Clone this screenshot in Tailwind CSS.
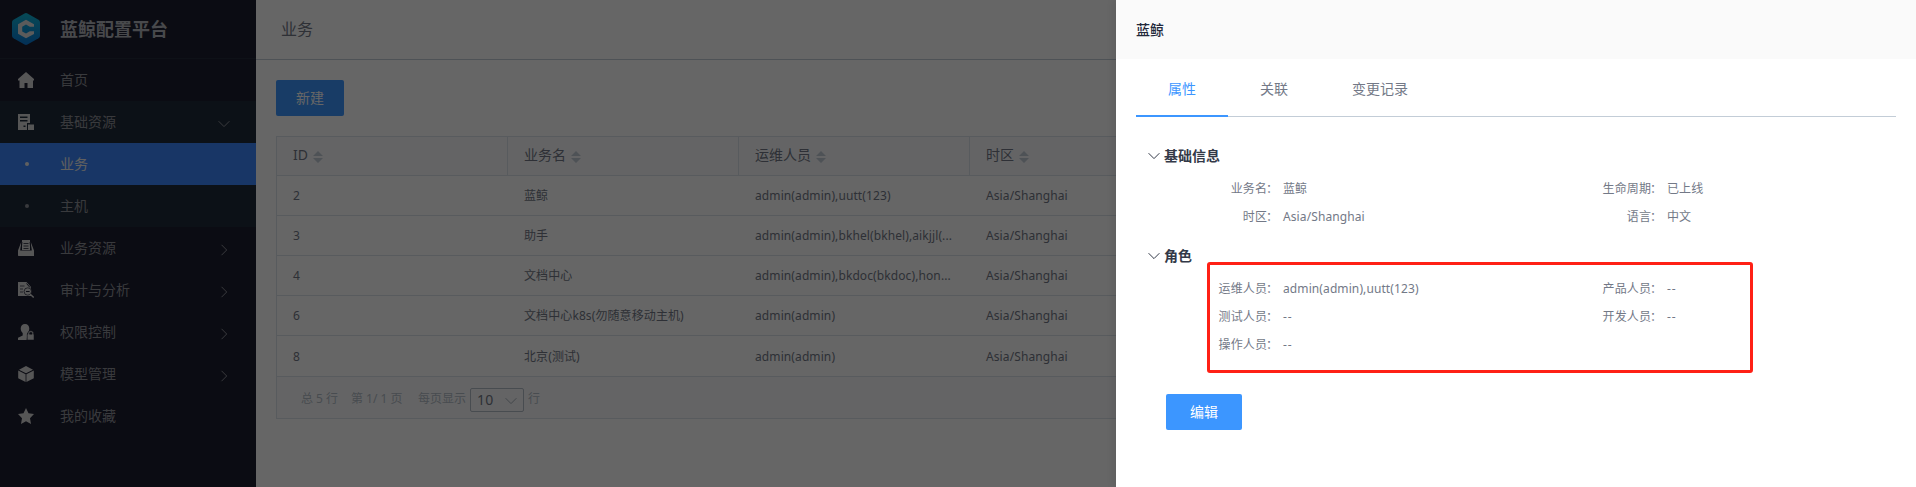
<!DOCTYPE html>
<html lang="zh-CN">
<head>
<meta charset="utf-8">
<title>蓝鲸配置平台</title>
<script src="https://cdn.jsdelivr.net/npm/@tailwindcss/browser@4"></script>
</head>
<body class="relative h-[487px] w-[1916px] overflow-hidden bg-white font-['Noto_Sans','Noto_Sans_CJK_SC',sans-serif] text-xs text-[#737987]">
<svg class="hidden">
  <symbol id="right" viewBox="0 0 12 12"><path d="M3.5 .8 8.7 6 3.5 11.2" fill="none" stroke="currentColor"/></symbol>
  <symbol id="down" viewBox="0 0 12 12"><path d="M.6 3.2 6 8.6 11.4 3.2" fill="none" stroke="currentColor"/></symbol>
  <symbol id="sort" viewBox="0 0 10 12"><path d="M5 0 10 5H0ZM0 7H10L5 12Z" fill="currentColor"/></symbol>
</svg>
<div class="flex h-full">
  <!-- Sidebar -->
  <aside class="flex w-64 shrink-0 flex-col bg-[#1c1e30] text-sm text-[#8f9198]">
    <div class="flex h-[59px] items-center border-b border-[#252b3a] pl-3 text-lg font-bold text-[#b4b6bd]">
      <svg class="mr-5 h-8 w-7" viewBox="0 0 28 32">
        <defs><linearGradient id="lg" x1="0" y1="0" x2="0" y2="1"><stop offset="0" stop-color="#10b8d8"/><stop offset="1" stop-color="#0a78d8"/></linearGradient></defs>
        <path d="M12.5.5q1.500-.8 3 0l11 6.200q1.500.9 1.500 2.600v13.400q0 1.700-1.500 2.600l-11 6.200q-1.500.8-3 0l-11-6.200Q0 24.400 0 22.700V9.300Q0 7.600 1.500 6.700Z" fill="url(#lg)"/>
        <path d="M14 6.800 22 11.300v2.400h-4.200L14 11.600 10.200 13.700v4.800L14 20.600l3.800-2.300H22v2.600L14 25.300 6 20.800v-9.500Z" fill="#e4e4e4"/>
      </svg>
      <span>蓝鲸配置平台</span>
    </div>
    <nav>
      <a class="flex h-[42px] items-center pl-[18px]"><svg class="mr-[26px] size-4 text-[#d8d8d8]" viewBox="0 0 16 16" fill="currentColor"><path d="M8 0 16 7v1.500h-1V16H9.500v-5h-3v5H1.500V8.500H0V7Z"/></svg>首页</a>
      <a class="flex h-[42px] items-center bg-[#202c3b] pr-[26px] pl-[18px]"><svg class="mr-[26px] size-4 text-[#d8d8d8]" viewBox="0 0 16 16" fill="currentColor" fill-rule="evenodd"><path d="M0 0H12V9H9V16H0ZM2 2.500V4H9.500V2.500ZM2 6V7.500H9.500V6ZM5.500 11.500V13H7.500V11.500ZM10 10.500H16V16H10Z"/></svg><span class="flex-1">基础资源</span><svg class="mt-1 size-3"><use href="#down"/></svg></a>
      <a class="flex h-[42px] items-center bg-[#3c88ff] pl-[25px] text-[#f0f0f0]"><i class="mr-[31px] size-1 rounded-full bg-current"></i>业务</a>
      <a class="flex h-[42px] items-center bg-[#202c3b] pl-[25px]"><i class="mr-[31px] size-1 rounded-full bg-current"></i>主机</a>
      <a class="flex h-[42px] items-center pr-[26px] pl-[18px]"><svg class="mr-[26px] size-4 text-[#d8d8d8]" viewBox="0 0 16 16" fill="currentColor"><path d="M4 0H12V10H4Z"/><path d="M3.400 1.500 2.300 10.500H13.700L12.600 1.500 16 10.500V16H.5L0 15.500V10.500Z"/><path d="M5.500 3.500H10.500M5.500 6H10.500M5.500 8.500H10.500M4 2 3 10.200M12 2 13 10.200" stroke="#1c1e30" stroke-width=".8" fill="none"/></svg><span class="flex-1">业务资源</span><svg class="mt-1 size-3"><use href="#right"/></svg></a>
      <a class="flex h-[42px] items-center pr-[26px] pl-[18px]"><svg class="mr-[26px] size-4 text-[#d8d8d8]" viewBox="0 0 16 16"><path d="M0 0H8.500L13 5V14H0Z" fill="currentColor"/><path d="M2 4H6.500M2 7H5M2 10H5" stroke="#1c1e30" stroke-width=".7"/><path d="M8.500 1.500 12 5.500" stroke="#1c1e30"/><circle cx="9.800" cy="9.500" r="3.700" fill="currentColor" stroke="#1c1e30" stroke-width=".7"/><path d="M8 9.500h3.600" stroke="#1c1e30"/><path d="m12.200 12.200 3.500 3.300" stroke="currentColor" stroke-width="1.400"/></svg><span class="flex-1">审计与分析</span><svg class="mt-1 size-3"><use href="#right"/></svg></a>
      <a class="flex h-[42px] items-center pr-[26px] pl-[18px]"><svg class="mr-[26px] size-4 text-[#d8d8d8]" viewBox="0 0 16 16" fill="currentColor"><path d="M7 0c2.600 0 4.300 2 4.300 4.500C11.300 6.500 10.300 8 9.300 9v2L8.700 16H0v-2.200l4.700-2.300V9C3.700 8 2.700 6.500 2.700 4.500 2.700 2 4.400 0 7 0Z"/><path d="M9.200 10.200H10V9.500a2.800 2.800 0 0 1 5.600 0v.7H16V16H9.200ZM11.500 10.200h2.600v-.7a1.300 1.300 0 0 0-2.600 0Z" fill-rule="evenodd" stroke="#1c1e30" stroke-width=".5"/></svg><span class="flex-1">权限控制</span><svg class="mt-1 size-3"><use href="#right"/></svg></a>
      <a class="flex h-[42px] items-center pr-[26px] pl-[18px]"><svg class="mr-[26px] size-4 text-[#d8d8d8]" viewBox="0 0 16 16" fill="currentColor"><path d="M8 0 15 3.700 8 7.300 1 3.700ZM.2 4.500 7.600 8.300V16L.2 12.300ZM15.800 4.500 8.400 8.300V16L15.800 12.300Z"/></svg><span class="flex-1">模型管理</span><svg class="mt-1 size-3"><use href="#right"/></svg></a>
      <a class="flex h-[42px] items-center pl-[18px]"><svg class="mr-[26px] size-4 text-[#d8d8d8]" viewBox="0 0 16 16" fill="currentColor"><path d="m8 0 2.500 5.300 5.500.8-4 4.100 1 5.800-5-2.800L3 16l1-5.800L0 6.100l5.500-.8Z"/></svg>我的收藏</a>
    </nav>
  </aside>

  <!-- Business list -->
  <main class="flex-1">
    <header class="flex h-[60px] items-center border-b border-[#c3cdd7] pl-[25px] text-base"><span class="-mt-0.5">业务</span></header>
    <div class="px-5 pt-5">
      <button class="flex h-9 w-[68px] items-center justify-center rounded-xs bg-[#3c96ff] text-sm text-white">新建</button>
      <div class="mt-5 w-[1620px] border border-[#dde4eb]">
        <div class="grid h-[39px] grid-cols-[231px_231px_231px_1fr] border-b border-[#dde4eb] bg-[#fafbfd] text-sm *:flex *:items-center *:gap-[5px] *:pb-0.5 *:pl-4">
          <div class="border-r border-[#dde4eb]">ID<svg class="mt-[3px] h-3 w-2.5 text-[#c3cdd7]"><use href="#sort"/></svg></div>
          <div class="border-r border-[#dde4eb]">业务名<svg class="mt-[3px] h-3 w-2.5 text-[#c3cdd7]"><use href="#sort"/></svg></div>
          <div class="border-r border-[#dde4eb]">运维人员<svg class="mt-[3px] h-3 w-2.5 text-[#c3cdd7]"><use href="#sort"/></svg></div>
          <div>时区<svg class="mt-[3px] h-3 w-2.5 text-[#c3cdd7]"><use href="#sort"/></svg></div>
        </div>
        <div class="tracking-[0.1px]">
          <div class="grid h-10 grid-cols-[231px_231px_231px_1fr] items-center border-b border-[#dde4eb] *:px-4"><div>2</div><div>蓝鲸</div><div>admin(admin),uutt(123)</div><div>Asia/Shanghai</div></div>
          <div class="grid h-10 grid-cols-[231px_231px_231px_1fr] items-center border-b border-[#dde4eb] *:px-4"><div>3</div><div>助手</div><div class="whitespace-nowrap">admin(admin),bkhel(bkhel),aikjjl(...</div><div>Asia/Shanghai</div></div>
          <div class="grid h-10 grid-cols-[231px_231px_231px_1fr] items-center border-b border-[#dde4eb] *:px-4"><div>4</div><div>文档中心</div><div class="whitespace-nowrap">admin(admin),bkdoc(bkdoc),hon...</div><div>Asia/Shanghai</div></div>
          <div class="grid h-10 grid-cols-[231px_231px_231px_1fr] items-center border-b border-[#dde4eb] *:px-4"><div>6</div><div>文档中心k8s(勿随意移动主机)</div><div>admin(admin)</div><div>Asia/Shanghai</div></div>
          <div class="grid h-[41px] grid-cols-[231px_231px_231px_1fr] items-center border-b border-[#dde4eb] pt-px *:px-4"><div>8</div><div>北京(测试)</div><div>admin(admin)</div><div>Asia/Shanghai</div></div>
        </div>
        <div class="flex h-[41px] items-center bg-[#fafbfd] pt-0.5 pl-6 text-[#b4bdc8]">
          <span class="w-[50px]">总 5 行</span><span class="w-[67px]">第 1/ 1 页</span><span class="w-[52px]">每页显示</span>
          <span class="mt-0.5 flex h-6 w-[54px] items-center justify-between rounded-xs border border-[#b4bdc8] pr-1.5 pl-1.5 text-sm text-[#737987]"><span class="tracking-[0.3px]">10</span><svg class="mt-0.5 size-3 text-[#a5aeb9]"><use href="#down"/></svg></span>
          <span class="ml-1">行</span>
        </div>
      </div>
    </div>
  </main>
</div>

<div class="absolute inset-0 bg-black/60"></div>

<!-- Detail drawer -->
<section class="absolute inset-y-0 right-0 w-[800px] bg-white shadow-[-4px_0_6px_rgba(0,0,0,0.06)]">
  <h2 class="flex h-[59px] items-center bg-[#fafafa] pl-5 text-sm font-medium text-[#23283a]">蓝鲸</h2>
  <div class="mx-5 flex h-[58px] border-b border-[#c3cdd7] text-sm">
    <a class="flex h-[58px] w-[92px] justify-center border-b-2 border-[#3c96ff] pt-5 text-[#3c96ff]">属性</a>
    <a class="w-[92px] pt-5 text-center">关联</a>
    <a class="w-[120px] pt-5 text-center">变更记录</a>
  </div>
  <div class="pt-[29px] pl-8">
    <h3 class="flex h-5 items-center gap-1 text-sm font-bold text-[#333948]"><svg class="size-3"><use href="#down"/></svg>基础信息</h3>
    <dl class="mt-[9px] grid grid-cols-[131px_253px_131px_200px] leading-7 tracking-[0.1px] [&>dd]:pl-1 [&>dt]:flex [&>dt]:justify-end [&_i]:mr-px [&_i]:-ml-px [&_i]:w-3 [&_i]:not-italic">
      <dt>业务名<i>：</i></dt><dd>蓝鲸</dd><dt>生命周期<i>：</i></dt><dd>已上线</dd>
      <dt>时区<i>：</i></dt><dd>Asia/Shanghai</dd><dt>语言<i>：</i></dt><dd>中文</dd>
    </dl>
    <h3 class="mt-[15px] flex h-5 items-center gap-1 text-sm font-bold text-[#333948]"><svg class="size-3"><use href="#down"/></svg>角色</h3>
    <dl class="mt-[9px] grid grid-cols-[131px_253px_131px_200px] leading-7 tracking-[0.1px] [&>dd]:pl-1 [&>dt]:flex [&>dt]:justify-end [&_i]:mr-px [&_i]:-ml-px [&_i]:w-3 [&_i]:not-italic">
      <dt>运维人员<i>：</i></dt><dd>admin(admin),uutt(123)</dd><dt>产品人员<i>：</i></dt><dd class="tracking-[1px]">--</dd>
      <dt>测试人员<i>：</i></dt><dd class="tracking-[1px]">--</dd><dt>开发人员<i>：</i></dt><dd class="tracking-[1px]">--</dd>
      <dt>操作人员<i>：</i></dt><dd class="tracking-[1px]">--</dd>
    </dl>
    <button class="mt-[35px] ml-[18px] flex h-9 w-[76px] items-center justify-center rounded-xs bg-[#3c96ff] text-sm text-white">编辑</button>
  </div>
  <!-- Highlight frame around the roles -->
  <div class="absolute top-[262px] left-[91px] h-[111px] w-[546px] rounded-[3px] border-3 border-[#ff2015]"></div>
</section>
</body>
</html>
